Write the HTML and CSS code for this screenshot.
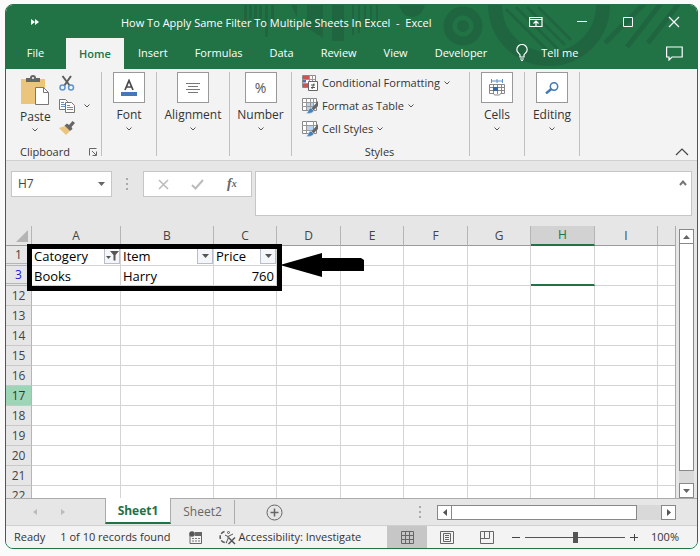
FILE: index.html
```html
<!DOCTYPE html>
<html lang="en">
<head>
<meta charset="utf-8">
<title>How To Apply Same Filter To Multiple Sheets In Excel - Excel</title>
<link rel="stylesheet" href="styles.css">
</head>
<body>
<main class="window">
  <header class="top">
    <svg class="top-art" width="420" height="64" viewBox="0 0 420 64" aria-hidden="true">
      <g fill="#1f6640">
        <path d="M3 0h3v18h-3zM8 0h3v14h-3zM13 0h3v18h-3zM18 0h3v14h-3zM24 0h3v32h-3zM30 0h3v18h-3zM50 0h6v12zM66 0h16v33l-16-10zM91 0h12v36h-12z"/>
        <path d="M111 0h2v30h-2zM117 0h2v28h-2zM123 0h2v24h-2zM129 0h2v22h-2zM135 0h2v18h-2zM158 0h26q-3 12-13 12t-13-12z"/>
      </g>
      <g fill="none" stroke="#1f6640">
        <circle cx="222" cy="21" r="15" stroke-width="9"/>
        <circle cx="222" cy="21" r="3" stroke-width="6"/>
        <path d="M254 0a54 54 0 0 0 108 0" stroke-width="14"/>
        <path d="M265 4l44 44M275 2l42 42M286 2l38 38M297 2l33 33" stroke-width="3"/>
        <path d="M428 -12l-42 54M414 -12l-50 50M443 -8l-36 46" stroke-width="5"/>
      </g>
    </svg>
    <div class="titlebar">
      <button class="quick" aria-label="Customize Quick Access Toolbar"><svg width="8" height="6" viewBox="0 0 8 6"><path d="M0 0l4 3-4 3zM4 0l4 3-4 3z" fill="#fff"/></svg></button>
      <h1 class="title">How To Apply Same Filter To Multiple Sheets In Excel &nbsp;-&nbsp; Excel</h1>
      <div class="controls">
        <button aria-label="Ribbon display options"><svg width="14" height="12" viewBox="0 0 14 12" fill="none" stroke="#fff"><path d="M.5 1.500h12.500v9H.5zM.5 3.500h12.500M7 10V5M4.500 7.500L7 5l2.500 2.500" stroke-width="1.200"/></svg></button>
        <button aria-label="Minimize"><svg width="12" height="12" viewBox="0 0 12 12"><path d="M1 5.500h10" stroke="#fff"/></svg></button>
        <button aria-label="Maximize"><svg width="12" height="12" viewBox="0 0 12 12"><path d="M1.500 1.500h9v9h-9z" stroke="#fff" fill="none"/></svg></button>
        <button aria-label="Close"><svg width="12" height="12" viewBox="0 0 12 12"><path d="M1 1l10 10M11 1L1 11" stroke="#fff" stroke-width="1.200"/></svg></button>
      </div>
    </div>
    <nav class="tabs">
      <button class="tab file">File</button>
      <button class="tab active">Home</button>
      <button class="tab">Insert</button>
      <button class="tab">Formulas</button>
      <button class="tab">Data</button>
      <button class="tab">Review</button>
      <button class="tab">View</button>
      <button class="tab">Developer</button>
      <button class="tab tell"><svg width="12" height="18" viewBox="0 0 12 18" fill="none" stroke="#fff" stroke-width="1.200"><path d="M4 13v-2C3.500 9.500.8 8.500.8 5.700a5.200 5.200 0 0 1 10.400 0C11.200 8.500 8.500 9.500 8 11v2zM4 15h4M5 16.500h2"/></svg>Tell me</button>
      <button class="comment" aria-label="Comments"><svg width="17" height="15" viewBox="0 0 17 15" fill="none" stroke="#fff" stroke-width="1.200"><path d="M.6 1h15.600v10H6l-3 3v-3H.6z"/></svg></button>
    </nav>
  </header>

  <section class="ribbon">
    <div class="group clipboard">
      <div class="clip-main">
        <button class="paste">
          <svg width="30" height="31" viewBox="0 0 30 31"><path d="M1 4h24v25H1z" fill="#ecc57c"/><path d="M6 7V3h4a3 3 0 0 1 6 0h4v4z" fill="#666"/><circle cx="13" cy="3" r="1" fill="#fff"/><path d="M15.500 12.500h8l5 5v12h-13z" fill="#fff" stroke="#777"/><path d="M23.500 12.500v5h5" fill="none" stroke="#777"/></svg>
          <span>Paste</span>
          <svg class="chev" viewBox="0 0 6 4"><path d="M.5.5L3 3 5.500.5"/></svg>
        </button>
        <div class="clip-side">
          <button aria-label="Cut"><svg width="16" height="16" viewBox="0 0 16 16" fill="none"><path d="M3.500 1L11 11M12 1L5 11" stroke="#5c5c5c" stroke-width="2"/><circle cx="3.500" cy="12.500" r="2.500" stroke="#6295cf" stroke-width="1.500"/><circle cx="12" cy="12.500" r="2.500" stroke="#6295cf" stroke-width="1.500"/></svg></button>
          <button class="copy" aria-label="Copy"><svg width="16" height="14" viewBox="0 0 16 14" fill="#fff" stroke="#777"><path d="M.5.5h6l2 2v8h-8z"/><path d="M2 3.500h3M2 5.500h4M2 7.500h4" stroke="#5d8fc4"/><path d="M6.500 3.500h6l3 3v7h-9z"/><path d="M8 6.500h3M8 8.500h6M8 10.500h6" stroke="#5d8fc4"/></svg><svg class="chev" viewBox="0 0 6 4"><path d="M.5.5L3 3 5.500.5"/></svg></button>
          <button aria-label="Format Painter"><svg width="16" height="14" viewBox="0 0 16 14"><path d="M0 7l6-2 5 5-4 4z" fill="#ecc57c"/><path d="M5.500 4.500L8 2.500l2 1.500L13.500 0 16 2l-3.500 4L13.500 8 11 10z" fill="#666"/></svg></button>
        </div>
      </div>
      <div class="caption"><span>Clipboard</span><button aria-label="Clipboard settings"><svg width="8" height="8" viewBox="0 0 8 8" fill="none" stroke="#666"><path d="M.5 7.500v-7h7M3 3l4 4M7.500 3.500v4h-4"/></svg></button></div>
    </div>
    <div class="group g-small">
      <button class="big"><i class="tile"><svg width="16" height="18" viewBox="0 0 16 18"><path d="M4 11L8 1.500 12 11M5 8h6" fill="none" stroke="#4a4a4a" stroke-width="1.700"/><path d="M0 13h16v4H0z" fill="#4478b6"/></svg></i><span>Font</span><svg class="chev" viewBox="0 0 6 4"><path d="M.5.5L3 3 5.500.5"/></svg></button>
    </div>
    <div class="group g-align">
      <button class="big"><i class="tile"><svg width="14" height="12" viewBox="0 0 14 12"><path d="M0 1.500h14M2 4.500h10M0 7.500h14M2 10.500h10" stroke="#777"/></svg></i><span>Alignment</span><svg class="chev" viewBox="0 0 6 4"><path d="M.5.5L3 3 5.500.5"/></svg></button>
    </div>
    <div class="group g-number">
      <button class="big"><i class="tile percent">%</i><span>Number</span><svg class="chev" viewBox="0 0 6 4"><path d="M.5.5L3 3 5.500.5"/></svg></button>
    </div>
    <div class="group styles">
      <div class="style-list">
        <button><svg width="16" height="16" viewBox="0 0 16 16"><path d="M.5.5h13v12H.5z" fill="#fff" stroke="#888"/><path d="M1 1h6v3H1zM1 8h5v4H1z" fill="#cb5846"/><path d="M1 4.500h3v3H1z" fill="#4478b6"/><path d="M0 4.500h13M0 8.500h13M7.500 0v12M10.500 0v12" stroke="#999" fill="none"/><path d="M6.500 6.500h9v9h-9z" fill="#fff" stroke="#666"/><path d="M9 10h4M9 12.500h4M12 8.500l-2 5.500" stroke="#555" fill="none"/></svg>Conditional Formatting<svg class="chev" viewBox="0 0 6 4"><path d="M.5.5L3 3 5.500.5"/></svg></button>
        <button><svg width="16" height="16" viewBox="0 0 16 16"><path d="M.5.5h14v12H.5z" fill="#fff" stroke="#888"/><path d="M4 4h8v8H4z" fill="#b9d3ec"/><path d="M0 4.500h14M0 8.500h14M4.500 0v12M8.500 0v12M11.500 0v12" stroke="#999" fill="none"/><path d="M16 3v5l-5 5-2-2z" fill="#666"/><path d="M9 10l3 3q-2 3-8 2.500 2-1 2.500-3.500 1-2 2.500-2z" fill="#4181bd" stroke="#f3f3f3" stroke-width=".5"/></svg>Format as Table<svg class="chev" viewBox="0 0 6 4"><path d="M.5.5L3 3 5.500.5"/></svg></button>
        <button><svg width="16" height="16" viewBox="0 0 16 16"><path d="M.5.5h14v12H.5z" fill="#fff" stroke="#888"/><path d="M4 4h8v5H4z" fill="#b9d3ec"/><path d="M0 4.500h14M0 9.500h14M4.500 0v12M11.500 0v12" stroke="#999" fill="none"/><path d="M16 3v5l-5 5-2-2z" fill="#666"/><path d="M9 10l3 3q-2 3-8 2.500 2-1 2.500-3.500 1-2 2.500-2z" fill="#4181bd" stroke="#f3f3f3" stroke-width=".5"/></svg>Cell Styles<svg class="chev" viewBox="0 0 6 4"><path d="M.5.5L3 3 5.500.5"/></svg></button>
      </div>
      <div class="caption center">Styles</div>
    </div>
    <div class="group g-small">
      <button class="big"><i class="tile"><svg width="16" height="17" viewBox="0 0 16 17" fill="none"><path d="M2 2h12M2.500 0v4M13.500 0v4M8 0v4" stroke="#5d8fc4"/><path d="M.5 5.500h15v9h-4l-1 1.500H5.500l-1-1.500h-4zM0 8.500h16M0 11.500h16M4.500 5v10M8.500 5v10M12.500 5v10" stroke="#888"/><path d="M4 8h5v4H4z" fill="#3568a8"/></svg></i><span>Cells</span><svg class="chev" viewBox="0 0 6 4"><path d="M.5.5L3 3 5.500.5"/></svg></button>
    </div>
    <div class="group g-small">
      <button class="big"><i class="tile"><svg width="14" height="12" viewBox="0 0 14 12" fill="none" stroke="#4478b6"><circle cx="9" cy="4.500" r="3.700" stroke-width="1.500"/><path d="M6.300 7L1 11.500" stroke-width="2.400"/></svg></i><span>Editing</span><svg class="chev" viewBox="0 0 6 4"><path d="M.5.5L3 3 5.500.5"/></svg></button>
    </div>
    <button class="collapse" aria-label="Collapse the ribbon"><svg width="14" height="8" viewBox="0 0 14 8" fill="none" stroke="#444" stroke-width="1.200"><path d="M1 7l6-6 6 6"/></svg></button>
  </section>

  <section class="formula-bar">
    <div class="namebox"><input aria-label="Name box" value="H7"><svg width="7" height="4" viewBox="0 0 7 4"><path d="M0 0h7L3.500 4z" fill="#666"/></svg></div>
    <svg class="dots" width="2" height="12" viewBox="0 0 2 12"><path d="M0 1h2M0 6h2M0 11h2" stroke="#aaa" stroke-width="2"/></svg>
    <div class="fx">
      <button aria-label="Cancel"><svg width="11" height="11" viewBox="0 0 11 11"><path d="M1 1l9 9M10 1l-9 9" stroke="#bbb" stroke-width="1.500"/></svg></button>
      <button aria-label="Enter"><svg width="13" height="11" viewBox="0 0 13 11"><path d="M1 6l3.500 3.500L12 1" stroke="#bbb" stroke-width="2" fill="none"/></svg></button>
      <button class="fn" aria-label="Insert function">f<sub>x</sub></button>
    </div>
    <div class="formula"><textarea aria-label="Formula"></textarea><button aria-label="Collapse formula bar"><svg width="8" height="6" viewBox="0 0 8 6"><path d="M1 5l3-3.500L7 5" fill="none" stroke="#777" stroke-width="2"/></svg></button></div>
  </section>

  <section class="sheet">
    <div class="grid">
      <table>
        <colgroup><col class="c-row"><col class="c-a"><col class="c-b"><col class="c-c"><col class="c-std"><col class="c-c"><col class="c-std"><col class="c-c"><col class="c-std"><col class="c-c"><col></colgroup>
        <thead><tr><th class="corner"><svg width="12" height="12" viewBox="0 0 12 12"><path d="M12 0v12H0z" fill="#b4b4b4"/></svg></th><th>A</th><th>B</th><th>C</th><th>D</th><th>E</th><th>F</th><th>G</th><th class="sel">H</th><th>I</th><th></th></tr></thead>
        <tbody>
          <tr><th class="skip">1</th><td><div class="cell">Catogery<button class="filter" aria-label="Filter Catogery"><svg width="13" height="10" viewBox="0 0 13 10"><path d="M4 0h9L9.500 4v5.500H7.500V4zM0 5h5L2.500 8z" fill="#555"/></svg></button></div></td><td><div class="cell">Item<button class="filter" aria-label="Filter Item"><svg width="7" height="4" viewBox="0 0 7 4"><path d="M0 0h7L3.500 4z" fill="#555"/></svg></button></div></td><td><div class="cell">Price<button class="filter" aria-label="Filter Price"><svg width="7" height="4" viewBox="0 0 7 4"><path d="M0 0h7L3.500 4z" fill="#555"/></svg></button></div></td><td></td><td></td><td></td><td></td><td></td><td></td><td></td></tr>
          <tr><th class="skip filtered">3</th><td>Books</td><td>Harry</td><td class="num">760</td><td></td><td></td><td></td><td></td><td class="edge"></td><td></td><td></td></tr>
          <tr><th>12</th><td></td><td></td><td></td><td></td><td></td><td></td><td></td><td></td><td></td><td></td></tr>
          <tr><th>13</th><td></td><td></td><td></td><td></td><td></td><td></td><td></td><td></td><td></td><td></td></tr>
          <tr><th>14</th><td></td><td></td><td></td><td></td><td></td><td></td><td></td><td></td><td></td><td></td></tr>
          <tr><th>15</th><td></td><td></td><td></td><td></td><td></td><td></td><td></td><td></td><td></td><td></td></tr>
          <tr><th>16</th><td></td><td></td><td></td><td></td><td></td><td></td><td></td><td></td><td></td><td></td></tr>
          <tr><th class="current">17</th><td></td><td></td><td></td><td></td><td></td><td></td><td></td><td></td><td></td><td></td></tr>
          <tr><th>18</th><td></td><td></td><td></td><td></td><td></td><td></td><td></td><td></td><td></td><td></td></tr>
          <tr><th>19</th><td></td><td></td><td></td><td></td><td></td><td></td><td></td><td></td><td></td><td></td></tr>
          <tr><th>20</th><td></td><td></td><td></td><td></td><td></td><td></td><td></td><td></td><td></td><td></td></tr>
          <tr><th>21</th><td></td><td></td><td></td><td></td><td></td><td></td><td></td><td></td><td></td><td></td></tr>
          <tr><th>22</th><td></td><td></td><td></td><td></td><td></td><td></td><td></td><td></td><td></td><td></td></tr>
        </tbody>
      </table>
      <div class="highlight"></div>
      <svg class="arrow" width="84" height="24" viewBox="0 0 84 24"><path d="M0 12L42 0v5h39l3 2v11H42v6z"/></svg>
    </div>
    <div class="vscroll">
      <button aria-label="Scroll up"><svg width="7" height="4" viewBox="0 0 7 4"><path d="M0 4h7L3.500 0z" fill="#666"/></svg></button>
      <div class="vthumb"></div>
      <button aria-label="Scroll down"><svg width="7" height="4" viewBox="0 0 7 4"><path d="M0 0h7L3.500 4z" fill="#666"/></svg></button>
    </div>
  </section>

  <nav class="sheetbar">
    <div class="sheetnav">
      <button aria-label="Previous sheet"><svg width="4" height="6" viewBox="0 0 4 6"><path d="M4 0v6L0 3z" fill="#bbb"/></svg></button>
      <button aria-label="Next sheet"><svg width="4" height="6" viewBox="0 0 4 6"><path d="M0 0v6l4-3z" fill="#bbb"/></svg></button>
    </div>
    <button class="sheet-tab on">Sheet1</button>
    <button class="sheet-tab">Sheet2</button>
    <button class="add" aria-label="New sheet"><svg width="17" height="17" viewBox="0 0 17 17" fill="none" stroke="#666"><circle cx="8.500" cy="8.500" r="7.500"/><path d="M4.500 8.500h8M8.500 4.500v8" stroke-width="1.500"/></svg></button>
    <div class="hside">
      <svg width="2" height="12" viewBox="0 0 2 12"><path d="M0 1h2M0 6h2M0 11h2" stroke="#aaa" stroke-width="2"/></svg>
      <div class="hscroll">
        <button aria-label="Scroll left"><svg width="4" height="7" viewBox="0 0 4 7"><path d="M4 0v7L0 3.500z" fill="#555"/></svg></button>
        <div class="hthumb"></div>
        <button aria-label="Scroll right"><svg width="4" height="7" viewBox="0 0 4 7"><path d="M0 0v7l4-3.500z" fill="#555"/></svg></button>
      </div>
    </div>
  </nav>

  <footer class="status">
    <span class="ready">Ready</span>
    <span class="found">1 of 10 records found</span>
    <svg class="macro" width="13" height="13" viewBox="0 0 13 13"><path d="M1 4v8.500h11.500v-11H6" fill="none" stroke="#666"/><path d="M6 1h7v4H6z" fill="#666"/><circle cx="3" cy="3" r="2.800" fill="#555"/><path d="M3 7.500h8M3 10h8" stroke="#777" stroke-dasharray="2 1"/></svg>
    <button class="access"><svg width="17" height="15" viewBox="0 0 17 15" fill="none" stroke="#555"><path d="M5.500 1.500A5.500 5.500 0 0 0 8 12.500" stroke-width="1.500" stroke-dasharray="4 1.500"/><circle cx="9.500" cy="2.500" r="1"/><path d="M6 5l3 1.500L14 4M9 6.500V9l-2 4"/><path d="M9.500 7.500l6.500 6.500M16 7.500L9.500 14" stroke-width="1.500"/></svg>Accessibility: Investigate</button>
    <div class="views">
      <button class="view on" aria-label="Normal view"><svg width="13" height="13" viewBox="0 0 13 13" fill="none" stroke="#666"><path d="M.5.5h12v12H.5zM.5 4.500h12M.5 8.500h12M4.500.5v12M8.500.5v12"/></svg></button>
      <button class="view" aria-label="Page layout view"><svg width="14" height="13" viewBox="0 0 14 13" fill="none" stroke="#666"><path d="M.5.5h13v12H.5zM3.500 2.500h7v8h-7zM5 4.500h4M5 6.500h4M5 8.500h4"/></svg></button>
      <button class="view" aria-label="Page break preview"><svg width="14" height="13" viewBox="0 0 14 13" fill="none" stroke="#666"><path d="M.5 12.500V.5h13v12zM4.500.5v7M9.500.5v7M.5 7.500h9"/></svg></button>
      <button class="zoom-step" aria-label="Zoom out"><svg width="8" height="8" viewBox="0 0 8 8"><path d="M0 4.500h8" stroke="#444"/></svg></button>
      <input class="zoom" type="range" min="0" max="100" value="50" aria-label="Zoom">
      <button class="zoom-step" aria-label="Zoom in"><svg width="8" height="8" viewBox="0 0 8 8"><path d="M0 4.500h8M4.500 1v7" stroke="#444"/></svg></button>
      <span class="pct">100%</span>
    </div>
  </footer>
</main>
</body>
</html>
```
FILE: styles.css
```css
* { box-sizing: border-box; }
body { margin: 0; padding: 4px 2px 7px 5px; background: #fafafa; font: 12px/16px "Open Sans", "Noto Sans", sans-serif; color: #333; }
button { margin: 0; padding: 0; border: 0; background: none; font: inherit; color: inherit; display: flex; align-items: center; justify-content: center; white-space: nowrap; }
svg { display: block; flex: none; }
.window { height: calc(100vh - 11px); min-height: 400px; display: flex; flex-direction: column; border: 1px solid #217346; border-radius: 8px; overflow: hidden; background: #e6e6e6; }
.chev { width: 6px; height: 4px; fill: none; stroke: #555; }

.top { flex: none; position: relative; background: #217346; color: #fff; padding-bottom: 1px; }
.top-art { position: absolute; right: 36px; top: 0; overflow: visible; }
.titlebar { position: relative; height: 33px; display: flex; align-items: center; }
.quick { width: 8px; margin: 0 82px 0 25px; }
.title { flex: 1; margin: 0; padding-top: 3px; font-size: 11px; line-height: 16px; font-weight: 400; white-space: nowrap; }
.controls { display: flex; }
.controls button { width: 46px; height: 28px; }
.tabs { position: relative; display: flex; gap: 1px; height: 30px; font-size: 11px; }
.tab { padding: 0 13px; }
.tab.file { width: 59px; }
.tab.active { width: 58px; background: #f3f3f3; color: #217346; font-weight: 600; margin-bottom: -1px; }
.tab.tell { padding-left: 15px; gap: 13px; }
.comment { margin: 0 14px 0 auto; }

.ribbon { flex: none; display: flex; height: 92px; padding: 3px 0 4px; background: #f3f3f3; border-bottom: 1px solid #d0d0d0; }
.group { flex: none; display: flex; flex-direction: column; justify-content: space-between; border-right: 1px solid #c0c0c0; }
.clipboard { width: 96px; padding-left: 14px; }
.g-small { width: 55px; }
.g-align { width: 73px; }
.g-number { width: 62px; }
.styles { width: 178px; padding: 3px 0 0 10px; }
.clip-main { display: flex; gap: 8px; padding-top: 3px; }
.paste, .big { flex-direction: column; }
.paste { gap: 3px; justify-content: flex-start; }
.clip-side { display: flex; flex-direction: column; gap: 8px; align-items: flex-start; }
.copy { gap: 9px; }
.caption { display: flex; justify-content: space-between; padding-right: 4px; line-height: 8px; font-size: 11px; }
.center { justify-content: center; padding-right: 12px; }
.big { gap: 4px; width: 100%; }
.tile { width: 32px; height: 31px; display: flex; align-items: center; justify-content: center; background: #fff; border: 1px solid #999; font-style: normal; }
.percent { font-size: 14px; color: #555; }
.style-list { display: flex; flex-direction: column; align-items: flex-start; gap: 7px; font-size: 11px; }
.style-list button { gap: 4px; }
.collapse { margin: auto 8px 0 auto; }

.formula-bar { flex: none; display: flex; align-items: flex-start; height: 65px; padding: 10px 5px 0; }
.namebox { display: flex; align-items: center; width: 101px; height: 26px; padding: 0 6px; background: #fff; border: 1px solid #c6c6c6; }
.namebox input { flex: 1; min-width: 0; border: 0; padding: 0; background: none; font: inherit; color: #444; }
.dots { margin: 7px 15px 0 14px; }
.fx { display: flex; width: 109px; height: 26px; padding: 0 2px; background: #fff; border: 1px solid #c6c6c6; }
.fx button { flex: 1; }
.fx .fn { font: italic 700 14px/16px "Liberation Serif", serif; color: #666; }
.fn sub { font-size: 10px; line-height: 8px; }
.formula { flex: 1; display: flex; align-items: flex-start; height: 45px; margin-left: 3px; background: #fff; border: 1px solid #c6c6c6; }
.formula textarea { flex: 1; height: 43px; border: 0; resize: none; background: none; }
.formula button { margin: 8px 4px 0 0; }

.sheet { flex: 1; min-height: 0; display: flex; }
.grid { position: relative; flex: 1; min-width: 0; overflow: hidden; border-right: 1px solid #ababab; }
table { width: 100%; table-layout: fixed; border-collapse: separate; border-spacing: 0; color: #000; }
.c-row { width: 26px; } .c-a { width: 89px; } .c-b { width: 93px; } .c-c { width: 63px; } .c-std { width: 64px; }
th, td { height: 20px; padding: 0; line-height: 19px; white-space: nowrap; border: solid #d4d4d4; border-width: 0 1px 1px 0; }
td { background: #fff; padding-left: 2px; font-size: 13px; line-height: 18px; }
th { background: #e6e6e6; font-weight: 400; color: #444; text-align: center; border-color: #b5b5b5; }
thead th { border-bottom-color: #9b9b9b; }
tbody th { border-bottom-color: #c8c8c8; }
th:last-child, td:last-child { border-right: 0; }
.corner svg { margin-left: auto; margin-right: 3px; }
.sel { background: #d2d2d2; color: #217346; border-bottom: 2px solid #217346; line-height: 18px; }
.skip { border-bottom: 3px double #b5b5b5; line-height: 17px; }
.filtered { color: #1c1ce0; }
.current { background: #9fd5b7; color: #333; }
.num { text-align: right; padding-right: 2px; }
.edge { border-bottom: 2px solid #217346; }
.cell { display: flex; align-items: center; justify-content: space-between; height: 19px; }
.filter { width: 16px; height: 16px; background: #f5f6fa; border: 1px solid #b9bdc6; }
.highlight { position: absolute; left: 21px; top: 18px; width: 255px; height: 47px; border: 5px solid #000; }
.arrow { position: absolute; left: 274px; top: 27px; }
.vscroll { flex: none; width: 15px; margin: 3px 3px 0; display: flex; flex-direction: column; background: #d9d9d9; }
.vscroll button { height: 15px; background: #fff; border: 1px solid #888; }
.vthumb { flex: 1; margin-bottom: 12px; background: #fff; border: 1px solid #888; border-top: 0; }

.sheetbar { flex: none; display: flex; height: 28px; border-top: 1px solid #ababab; border-bottom: 1px solid #d0d0d0; }
.sheetnav { display: flex; width: 99px; padding-left: 27px; gap: 24px; }
.sheet-tab { width: 64px; height: 24px; margin-top: 1px; color: #666; border-right: 1px solid #ababab; }
.sheet-tab.on { width: 66px; height: 26px; margin-top: -1px; padding-top: 2px; background: #fff; color: #217346; font-weight: 700; border-left: 1px solid #ababab; border-bottom: 2px solid #217346; }
.add { margin-left: 31px; }
.hside { display: flex; align-items: center; gap: 16px; margin-left: auto; margin-right: 21px; }
.hscroll { display: flex; width: 239px; height: 15px; background: #d9d9d9; }
.hscroll button { width: 15px; background: #fff; border: 1px solid #888; }
.hthumb { flex: 1; margin-right: 24px; background: #fff; border: 1px solid #888; border-left: 0; }

.status { flex: none; display: flex; align-items: center; height: 22px; padding: 0 18px 0 8px; background: #f3f3f3; font-size: 11px; white-space: nowrap; }
.found { margin-left: 15px; }
.macro { margin: 0 17px 0 18px; }
.access { gap: 3px; }
.views { display: flex; align-items: center; margin-left: auto; height: 100%; }
.view { width: 40px; height: 100%; }
.view.on { background: #c6c6c6; }
.zoom-step { width: 8px; margin: 0 5px; }
.zoom { appearance: none; width: 100px; height: 12px; margin: 0; background: linear-gradient(#555, #555) center / 100% 1px no-repeat; }
.zoom::-webkit-slider-thumb { appearance: none; width: 5px; height: 11px; background: #555; }
.pct { margin-left: 8px; }
```
